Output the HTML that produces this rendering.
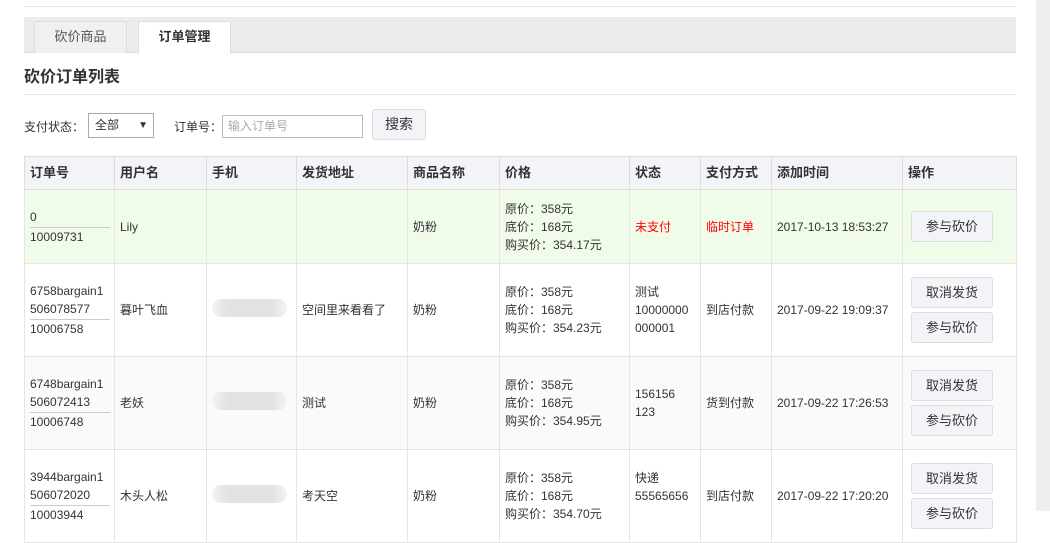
<!DOCTYPE html>
<html><head><meta charset="utf-8"><style>
*{margin:0;padding:0;box-sizing:border-box}
body{width:1050px;height:511px;overflow:hidden;background:#fff;font-family:"Liberation Sans","Noto Sans CJK SC",sans-serif;font-size:12px;color:#333;position:relative}
.sb{position:absolute;left:1036px;top:0;width:14px;height:511px;background:#efefef}
.topline{position:absolute;left:24px;top:6px;width:992px;border-top:1px solid #e8e8e8}
.tabbar{position:absolute;left:24px;top:17px;width:992px;height:36px;background:#ececec;border-bottom:1px solid #ddd}
.tab{position:absolute;top:4px;height:32px;width:93px;border:1px solid #ddd;border-bottom:none;text-align:center;line-height:30px;font-size:13px;color:#555;background:#f0f0f0}
.tab.a{background:#fff;color:#333;font-weight:bold;height:33px}
h1{position:absolute;left:24px;top:63px;font-size:16px;font-weight:bold;color:#333}
.line2{position:absolute;left:24px;top:94px;width:992px;border-top:1px solid #e8e8e8}
.f{position:absolute;top:118px;font-size:12px;color:#333}
.sel{position:absolute;left:88px;top:113px;width:66px;height:25px;border:1px solid #aaa;padding-left:6px;line-height:23px}
.inp{position:absolute;left:222px;top:115px;width:141px;height:23px;border:1px solid #bbb;padding-left:5px;line-height:21px;color:#aaa}
.btn{position:absolute;left:372px;top:109px;width:54px;height:31px;border:1px solid #ddd;border-radius:3px;background:#f3f4f8;text-align:center;line-height:29px;font-size:14px}
table{position:absolute;left:24px;top:156px;border-collapse:collapse;width:992px;table-layout:fixed}
td,th{border:1px solid #e5e5e5;padding:0 5px;vertical-align:middle;line-height:18px;text-align:left}
th{height:33px;background:#f3f4f8;font-size:13px;font-weight:bold;border-color:#ddd}
tr.g td{background:#f0fbea}
tr.z td{background:#fafafa}
.red{color:#f00}
.hr{border-top:1px solid #ccc;width:80px;margin:1px 0 0}
.b{display:block;width:82px;height:31px;border:1px solid #ddd;border-radius:3px;background:#f3f4f8;text-align:center;line-height:29px;font-size:13px;margin:4px 0 4px 3px}
.blur{display:inline-block;width:75px;height:18px;background:linear-gradient(90deg,#f4f4f4,#e2e2e2 20%,#e2e2e2 80%,#f4f4f4);border-radius:9px}
</style></head><body>
<div class="topline"></div>
<div class="tabbar"><div class="tab" style="left:10px">砍价商品</div><div class="tab a" style="left:114px">订单管理</div></div>
<h1>砍价订单列表</h1>
<div class="line2"></div>
<div class="f" style="left:24px">支付状态：</div>
<div class="sel">全部<span style="position:absolute;right:5px;font-size:10px">▼</span></div>
<div class="f" style="left:174px">订单号：</div>
<div class="inp">输入订单号</div>
<div class="btn">搜索</div>
<table>
<colgroup><col style="width:90px"><col style="width:92px"><col style="width:90px"><col style="width:111px"><col style="width:92px"><col style="width:130px"><col style="width:71px"><col style="width:71px"><col style="width:131px"><col style="width:114px"></colgroup>
<tr><th>订单号</th><th>用户名</th><th>手机</th><th>发货地址</th><th>商品名称</th><th>价格</th><th>状态</th><th>支付方式</th><th>添加时间</th><th>操作</th></tr>
<tr class="g" style="height:74px"><td>0<div class="hr"></div>10009731</td><td>Lily</td><td></td><td></td><td>奶粉</td><td>原价：358元<br>底价：168元<br>购买价：354.17元</td><td class="red">未支付</td><td class="red">临时订单</td><td>2017-10-13 18:53:27</td><td><span class="b">参与砍价</span></td></tr>
<tr style="height:93px"><td>6758bargain1<br>506078577<div class="hr"></div>10006758</td><td>暮叶飞血</td><td><span class="blur"></span></td><td>空间里来看看了</td><td>奶粉</td><td>原价：358元<br>底价：168元<br>购买价：354.23元</td><td>测试<br>10000000<br>000001</td><td>到店付款</td><td>2017-09-22 19:09:37</td><td><span class="b">取消发货</span><span class="b">参与砍价</span></td></tr>
<tr class="z" style="height:93px"><td>6748bargain1<br>506072413<div class="hr"></div>10006748</td><td>老妖</td><td><span class="blur"></span></td><td>测试</td><td>奶粉</td><td>原价：358元<br>底价：168元<br>购买价：354.95元</td><td>156156<br>123</td><td>货到付款</td><td>2017-09-22 17:26:53</td><td><span class="b">取消发货</span><span class="b">参与砍价</span></td></tr>
<tr style="height:93px"><td>3944bargain1<br>506072020<div class="hr"></div>10003944</td><td>木头人松</td><td><span class="blur"></span></td><td>考天空</td><td>奶粉</td><td>原价：358元<br>底价：168元<br>购买价：354.70元</td><td>快递<br>55565656<br>&nbsp;</td><td>到店付款</td><td>2017-09-22 17:20:20</td><td><span class="b">取消发货</span><span class="b">参与砍价</span></td></tr>
</table>
<div class="sb"></div>
</body></html>
